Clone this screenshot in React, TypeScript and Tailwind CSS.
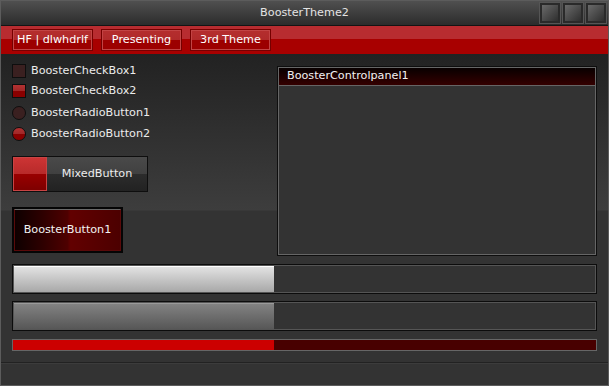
import React from "react";

const tabs = ["HF | dlwhdrlf", "Presenting", "3rd Theme"];

function WinButton() {
  return (
    <div className="h-[20px] w-[20px] border-2 border-[#2a2a2a] bg-[linear-gradient(135deg,#6a6a6a,#2e2e2e)] shadow-[0_0_0_1px_#555]" />
  );
}

function CheckRow({ label, kind, on }: { label: string; kind: "box" | "radio"; on: boolean }) {
  const shape = kind === "radio" ? "rounded-full" : "";
  const fill = on
    ? "bg-[linear-gradient(to_bottom,#b23232_0%,#a02828_50%,#8a0000_50%,#8a0000_100%)]"
    : "bg-[#3a2020]";
  return (
    <div className="flex h-[14px] items-center gap-[5px]">
      <div className={`h-[14px] w-[14px] border border-[#0e0e0e] ${shape} ${fill}`} />
      <span className="text-[11.2px] leading-none text-[#ececec]">{label}</span>
    </div>
  );
}

function Progress({ fill }: { fill: string }) {
  return (
    <div className="h-[30px] border border-[#0c0c0c]">
      <div className="flex h-full border border-[#555] bg-[#333]">
        <div className={`h-full w-[260px] ${fill}`} />
      </div>
    </div>
  );
}

export default function App() {
  return (
    <div
      className="flex h-[386px] w-[609px] flex-col border border-[#5c5c5c] bg-[#333] text-[#ececec]"
      style={{ fontFamily: '"DejaVu Sans", Verdana, sans-serif' }}
    >
      {/* Title bar */}
      <div className="relative flex h-[25px] items-center justify-center border-b border-[#141414] bg-[linear-gradient(to_bottom,#505050,#2c2c2c)]">
        <span className="text-[11.2px] text-[#e4e4e4]">BoosterTheme2</span>
        <div className="absolute right-[2px] top-[2px] flex gap-[3px]">
          <WinButton />
          <WinButton />
          <WinButton />
        </div>
      </div>

      {/* Red menu bar */}
      <div className="flex h-[28px] items-center gap-[8px] bg-[linear-gradient(to_bottom,#b82c30_0%,#b82c30_46%,#a80000_46%,#a80000_100%)] pl-[11px]">
        {tabs.map((t) => (
          <div
            key={t}
            className="flex h-[22px] w-[81px] items-center justify-center border border-[#760000] bg-[linear-gradient(to_bottom,#b52e2e_0%,#b02a2a_48%,#9c0000_48%,#9c0000_100%)] text-[11.2px] text-white shadow-[inset_0_0_0_1px_#c24444]"
          >
            {t}
          </div>
        ))}
      </div>

      {/* Content */}
      <div className="flex flex-1 flex-col bg-[linear-gradient(to_bottom,#222_0px,#3d3d3d_156px,#333_157px)] px-[11px]">
        <div className="flex h-[202px]">
          <div className="flex w-[265px] flex-col pt-[10px]">
            <div className="flex flex-col gap-[6px]">
              <CheckRow label="BoosterCheckBox1" kind="box" on={false} />
              <CheckRow label="BoosterCheckBox2" kind="box" on />
              <div className="mt-[2px] flex flex-col gap-[7px]">
                <CheckRow label="BoosterRadioButton1" kind="radio" on={false} />
                <CheckRow label="BoosterRadioButton2" kind="radio" on />
              </div>
            </div>

            <div className="mt-[15px] flex h-[36px] w-[136px] border border-[#0e0e0e]">
              <div className="w-[34px] border border-[#c84444] bg-[linear-gradient(to_bottom,#cc3434_0%,#b82a2a_50%,#990000_50%,#7e0000_100%)]" />
              <div className="flex flex-1 items-center justify-center bg-[linear-gradient(to_bottom,#4a4a4a_0%,#404040_50%,#2c2c2c_50%,#222_100%)] text-[11.2px] text-[#ececec]">
                MixedButton
              </div>
            </div>

            <div className="mt-[15px] h-[46px] w-[111px] border-2 border-[#050505]">
              <div className="flex h-full items-center justify-center border border-[#5a0a0a] border-t-[#6a6a6a] bg-[linear-gradient(to_right,#0e0000_0%,#2c0000_25%,#4e0000_50%,#620000_53%,#4c0000_100%)] text-[11.2px] text-[#f2f2f2]">
                BoosterButton1
              </div>
            </div>
          </div>

          {/* Control panel */}
          <div className="mt-[12px] h-[190px] flex-1 border border-[#0e0e0e]">
            <div className="flex h-full flex-col border border-[#666] bg-[#333]">
              <div className="flex h-[18px] items-center border-b border-[#666] bg-[linear-gradient(to_bottom,#080000,#340000)] pl-[8px] text-[11.2px] text-[#f2f2f2]">
                BoosterControlpanel1
              </div>
            </div>
          </div>
        </div>

        <div className="mt-[8px] flex flex-col gap-[7px]">
          <Progress fill="border-t border-white bg-[linear-gradient(to_bottom,#e2e2e2,#a8a8a8)]" />
          <Progress fill="border-t border-[#9a9a9a] bg-[linear-gradient(to_bottom,#828282,#575757)]" />
        </div>

        <div className="mt-[8px] flex h-[12px] border border-[#666]">
          <div className="w-[261px] bg-[#cc0000]" />
          <div className="flex-1 bg-[#480000]" />
        </div>
      </div>

      {/* Status bar */}
      <div className="mt-[11px] h-[23px] border-t border-[#222] bg-[#333] shadow-[inset_0_1px_0_#3c3c3c]" />
    </div>
  );
}
